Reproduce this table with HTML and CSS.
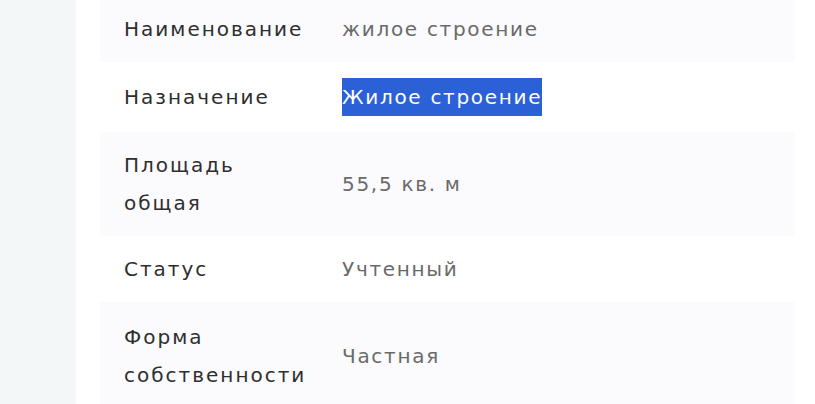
FILE: index.html
```html
<!DOCTYPE html>
<html lang="ru">
<head>
<meta charset="utf-8">
<link rel="stylesheet" href="styles.css">
</head>
<body>
<div class="page">
  <aside class="side"></aside>
  <main class="main">
    <dl class="props">
      <div class="row striped">
        <dt class="label">Наименование</dt>
        <dd class="value">жилое строение</dd>
      </div>
      <div class="row">
        <dt class="label">Назначение</dt>
        <dd class="value"><span class="sel">Жилое строение</span></dd>
      </div>
      <div class="row striped">
        <dt class="label">Площадь общая</dt>
        <dd class="value">55,5 кв. м</dd>
      </div>
      <div class="row">
        <dt class="label">Статус</dt>
        <dd class="value">Учтенный</dd>
      </div>
      <div class="row striped">
        <dt class="label">Форма собственности</dt>
        <dd class="value">Частная</dd>
      </div>
    </dl>
  </main>
</div>
</body>
</html>
```

FILE: styles.css
```css
html, body {
  margin: 0;
  padding: 0;
  background: #ffffff;
}
body {
  font-family: "DejaVu Sans", "Open Sans", sans-serif;
  font-size: 20px;
  overflow: hidden;
}
.page {
  display: flex;
  min-height: 404px;
}
.side {
  width: 76px;
  flex: none;
  background: #f3f7f8;
}
.main {
  flex: 1;
  padding: 0 20px 0 24px;
}
.props {
  margin: -4px 0 0 0;
}
.row {
  display: grid;
  grid-template-columns: 196px 1fr;
  column-gap: 22px;
  align-items: center;
  padding: 14px 0 14px 24px;
}
.row:last-child {
  padding: 16px 0 16px 24px;
}
.striped {
  background: #fbfafd;
}
.label {
  margin: 0;
  color: #2e2e2e;
  line-height: 38px;
  letter-spacing: 2px;
}
.value {
  margin: 0;
  color: #6a6a6a;
  line-height: 38px;
  letter-spacing: 1.7px;
}
.sel {
  background: #2b60d6;
  color: #ffffff;
  display: inline-block;
  line-height: 38px;
  margin: 2px 0;
  vertical-align: middle;
}
```
